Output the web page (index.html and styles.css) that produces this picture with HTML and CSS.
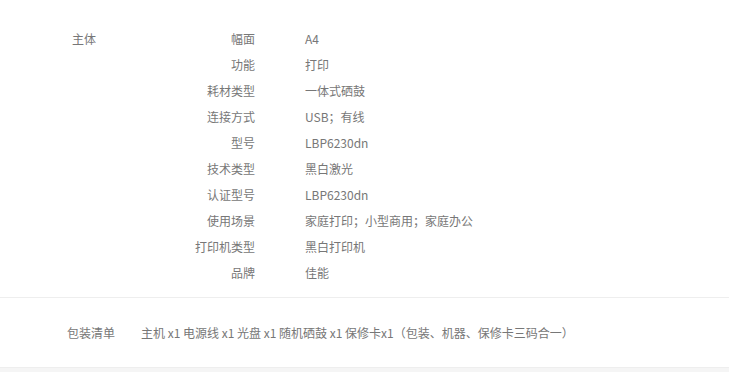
FILE: index.html
```html
<!DOCTYPE html>
<html lang="zh-CN">
<head>
    <meta charset="UTF-8">
    <meta name="viewport" content="width=device-width, initial-scale=1.0">
    <title>规格参数</title>
    <link rel="stylesheet" href="styles.css">
</head>
<body>
    <div class="spec">
        <div class="spec-group">
            <div class="group-name">主体</div>
            <dl class="spec-list">
                <dt>幅面</dt><dd>A4</dd>
                <dt>功能</dt><dd>打印</dd>
                <dt>耗材类型</dt><dd>一体式硒鼓</dd>
                <dt>连接方式</dt><dd>USB；有线</dd>
                <dt>型号</dt><dd>LBP6230dn</dd>
                <dt>技术类型</dt><dd>黑白激光</dd>
                <dt>认证型号</dt><dd>LBP6230dn</dd>
                <dt>使用场景</dt><dd>家庭打印；小型商用；家庭办公</dd>
                <dt>打印机类型</dt><dd>黑白打印机</dd>
                <dt>品牌</dt><dd>佳能</dd>
            </dl>
        </div>
        <div class="package">
            <span class="package-name">包装清单</span>
            <span class="package-items">主机 x1 电源线 x1 光盘 x1 随机硒鼓 x1 保修卡x1（包装、机器、保修卡三码合一）</span>
        </div>
        <div class="footer-band"></div>
    </div>
</body>
</html>
```

FILE: styles.css
```css
body {
    margin: 0;
    padding: 0;
    background-color: #fff;
    font-family: "Microsoft YaHei", "Noto Sans CJK SC", "Noto Sans", sans-serif;
    font-size: 12px;
    color: #777;
}

.spec-group {
    display: flex;
    padding: 26px 0 11px 72px;
    border-bottom: 1px solid #eee;
}

.group-name {
    width: 110px;
    line-height: 26px;
}

.spec-list {
    display: grid;
    grid-template-columns: 73px auto;
    column-gap: 50px;
    margin: 0;
    line-height: 26px;
}

.spec-list dt {
    text-align: right;
    white-space: nowrap;
}

.spec-list dd {
    margin: 0;
}

.package {
    display: flex;
    align-items: center;
    height: 69px;
    padding-left: 67px;
}

.package-name {
    width: 74px;
}

.footer-band {
    height: 10px;
    background-color: #f5f5f5;
    border-top: 1px solid #eee;
}
```
